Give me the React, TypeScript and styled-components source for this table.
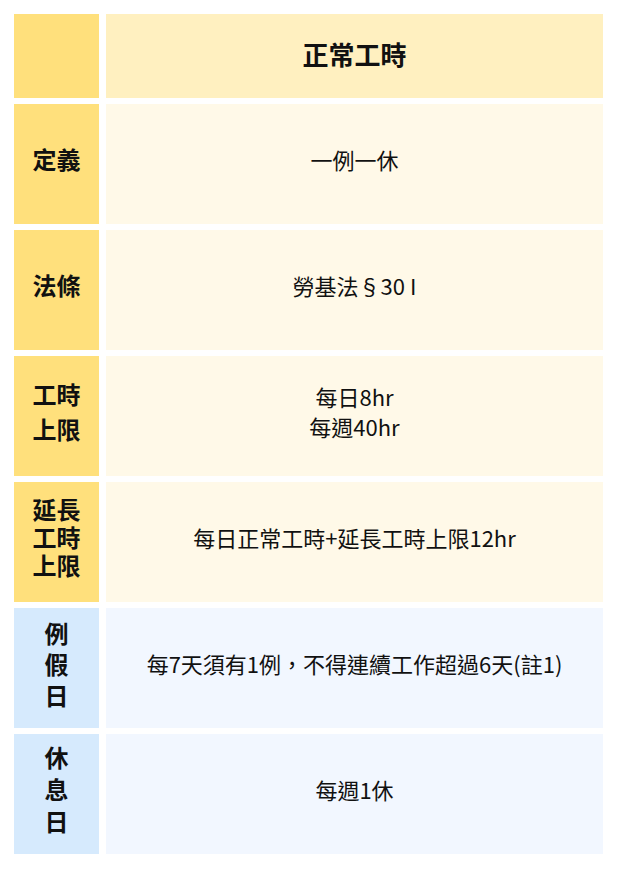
import React from "react";
import styled, { createGlobalStyle } from "styled-components";

const Global = createGlobalStyle`
  html, body { margin: 0; padding: 0; background: #ffffff; }
  body { font-family: "Noto Sans CJK TC", "Noto Sans", sans-serif; color: #111; }
`;

const Table = styled.div`
  display: grid;
  grid-template-columns: 85px 497px;
  grid-template-rows: 84px repeat(6, 120px);
  column-gap: 7px;
  row-gap: 6px;
  padding: 14px 14px 0 14px;
`;

type Tone = "yellow" | "blue";

const LabelCell = styled.div<{ $tone: Tone; $lh: number }>`
  background: ${(p) => (p.$tone === "yellow" ? "#FFE07C" : "#D6EAFD")};
  display: flex;
  align-items: center;
  justify-content: center;
  text-align: center;
  padding-bottom: 10px;
  font-size: 24px;
  font-weight: 700;
  line-height: ${(p) => p.$lh}px;
  color: #111;
`;

const HeadCell = styled.div`
  background: #FFF0C0;
  display: flex;
  align-items: center;
  justify-content: center;
  padding-bottom: 6px;
  font-size: 26px;
  font-weight: 700;
  color: #111;
`;

const BlankCell = styled.div`
  background: #FFE07C;
`;

const ValueCell = styled.div<{ $tone: Tone }>`
  background: ${(p) => (p.$tone === "yellow" ? "#FFF9E8" : "#F2F7FF")};
  display: flex;
  align-items: center;
  justify-content: center;
  text-align: center;
  padding-bottom: 10px;
  font-size: 22px;
  font-weight: 400;
  line-height: 30px;
  color: #111;
`;

const rows: { label: string[]; value: string[]; tone: Tone; lh: number }[] = [
  { label: ["定義"], value: ["一例一休"], tone: "yellow", lh: 30 },
  { label: ["法條"], value: ["勞基法§30 I"], tone: "yellow", lh: 30 },
  { label: ["工時", "上限"], value: ["每日8hr", "每週40hr"], tone: "yellow", lh: 35 },
  { label: ["延長", "工時", "上限"], value: ["每日正常工時+延長工時上限12hr"], tone: "yellow", lh: 28 },
  { label: ["例", "假", "日"], value: ["每7天須有1例，不得連續工作超過6天(註1)"], tone: "blue", lh: 31 },
  { label: ["休", "息", "日"], value: ["每週1休"], tone: "blue", lh: 32 },
];

const Lines = ({ items }: { items: string[] }) => (
  <div>
    {items.map((t, i) => (
      <div key={i}>{t}</div>
    ))}
  </div>
);

export default function App() {
  return (
    <>
      <Global />
      <Table>
        <BlankCell />
        <HeadCell>正常工時</HeadCell>
        {rows.map((r, i) => (
          <React.Fragment key={i}>
            <LabelCell $tone={r.tone} $lh={r.lh}>
              <Lines items={r.label} />
            </LabelCell>
            <ValueCell $tone={r.tone}>
              <Lines items={r.value} />
            </ValueCell>
          </React.Fragment>
        ))}
      </Table>
    </>
  );
}
